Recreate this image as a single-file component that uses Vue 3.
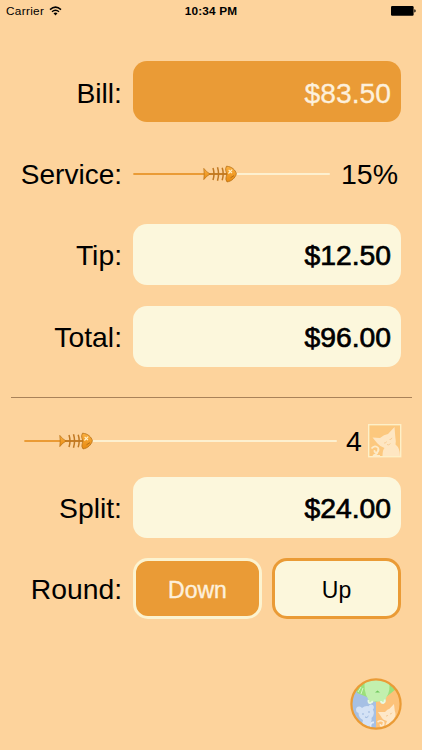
<script setup>
import { ref, computed } from 'vue'

const bill = ref(83.5)
const service = ref(15)
const people = ref(4)
const round = ref('down')

const tip = computed(() => {
  const raw = (bill.value * (100 + service.value)) / 100
  const total = round.value === 'down' ? Math.floor(raw) : Math.ceil(raw)
  return total - bill.value
})
const total = computed(() => bill.value + tip.value)
const split = computed(() => total.value / people.value)

// slider fill, in percent of the track
const serviceFill = computed(() => (service.value / 29) * 100)
const peopleFill = computed(() => ((people.value + 0.28) / 20) * 100)

function money(value) {
  return '$' + value.toFixed(2)
}
</script>

<template>
  <div class="screen">
    <svg class="defs" width="0" height="0">
      <defs>
        <linearGradient id="bone" x1="0" y1="0" x2="0" y2="1">
          <stop offset="0" stop-color="#fbb040" />
          <stop offset="1" stop-color="#e88a10" />
        </linearGradient>
        <symbol id="fish" viewBox="0 0 34 18">
          <path d="M5 9H25" stroke="#c07822" stroke-width="1.6" fill="none" />
          <path
            d="M10 3Q12 9 10 15M14.5 2.3Q16.6 9 14.5 15.7M19.2 2.8Q21.2 9 19.2 15.2"
            stroke="#c07822"
            stroke-width="1.5"
            fill="none"
          />
          <path d="M0.8 3.4Q3.5 7.2 7.2 9Q3.5 10.8 0.8 14.6Q1.6 9 0.8 3.4Z" fill="url(#bone)" stroke="#b87014" stroke-width="0.7" />
          <path
            d="M23.5 1.2C29 1.6 32.4 5 33.4 8.8C32.2 13 28.5 16.4 24 16.9Q22.4 14.5 23 12.5Q25 9 22.8 5.8Q22.2 3.5 23.5 1.2Z"
            fill="url(#bone)"
            stroke="#b87014"
            stroke-width="0.8"
          />
          <path d="M25.6 4.9L29 8.1M29.2 4.7L25.4 8.5" stroke="#fff1cc" stroke-width="1.2" />
          <path d="M27.5 12.8L31 10.6" stroke="#a86410" stroke-width="0.8" />
        </symbol>
      </defs>
    </svg>

    <header class="status">
      <div class="carrier">
        <span>Carrier</span>
        <svg width="13" height="10" viewBox="0 0 13 10">
          <path d="M1 3.6Q6.5 -1.4 12 3.6" fill="none" stroke="#000" stroke-width="1.5" />
          <path d="M3 5.8Q6.5 2.7 10 5.8" fill="none" stroke="#000" stroke-width="1.4" />
          <path d="M4.5 7.3Q6.5 5.6 8.5 7.3L6.5 9.4Z" />
        </svg>
      </div>
      <span class="time">10:34 PM</span>
      <svg class="battery" width="25" height="10" viewBox="0 0 25 10">
        <rect width="22.6" height="9.8" rx="1.2" />
        <path d="M23.3 3.3Q24.7 3.6 24.7 4.9Q24.7 6.2 23.3 6.5Z" />
      </svg>
    </header>

    <main>
      <div class="row bill">
        <label>Bill:</label>
        <div class="field active">{{ money(bill) }}</div>
      </div>
      <div class="row service">
        <label>Service:</label>
        <div class="slider">
          <div class="fill" :style="{ width: serviceFill + '%' }"></div>
          <svg class="thumb" :style="{ left: serviceFill + '%' }"><use href="#fish" /></svg>
        </div>
        <span class="percent">{{ service }}%</span>
      </div>
      <div class="row tip">
        <label>Tip:</label>
        <div class="field">{{ money(tip) }}</div>
      </div>
      <div class="row total">
        <label>Total:</label>
        <div class="field">{{ money(total) }}</div>
      </div>

      <hr />

      <div class="people">
        <div class="slider">
          <div class="fill" :style="{ width: peopleFill + '%' }"></div>
          <svg class="thumb" :style="{ left: peopleFill + '%' }"><use href="#fish" /></svg>
        </div>
        <span class="count">{{ people }}</span>
        <svg class="cat" width="34" height="34" viewBox="0 0 34 34">
          <rect x="0.7" y="0.7" width="32" height="32" fill="#fcc87e" stroke="#fdf0c8" stroke-width="1.4" />
          <path
            d="M4.5 13.5L12 14Q16 10.5 20 10L26.5 3L27.3 13Q28.3 18 27.5 20.5Q32 24 32 32H14.5Q14.5 26 16.5 24Q12 22.5 9.5 19.5Z"
            fill="#fee6c2"
          />
          <path d="M3.5 24.5Q7 20.5 10.2 24Q11.5 27.5 8.2 28.6Q5.8 28.3 6.7 26.2M10.2 25Q10.6 29.5 5 31.8H12" fill="none" stroke="#fdebc8" stroke-width="1.8" />
          <path d="M16 19Q18 19.5 18.5 17.5M21.5 15.5Q23.5 15.8 24 13.8M19 20.5Q20.8 21.8 22.5 19.5" fill="none" stroke="#f6c68b" stroke-width="0.8" />
        </svg>
      </div>

      <div class="row split">
        <label>Split:</label>
        <div class="field">{{ money(split) }}</div>
      </div>
      <div class="row round">
        <label>Round:</label>
        <div class="buttons">
          <button :class="{ selected: round === 'down' }" @click="round = 'down'">Down</button>
          <button :class="{ selected: round === 'up' }" @click="round = 'up'">Up</button>
        </div>
      </div>
    </main>

    <footer>
      <svg width="52" height="52" viewBox="0 0 52 52">
        <defs>
          <clipPath id="disc"><circle cx="26" cy="26" r="24.5" /></clipPath>
        </defs>
        <g clip-path="url(#disc)">
          <rect width="52" height="52" fill="#fcc27a" />
          <path d="M0 0H26V52H0Z" fill="#a6c0e4" />
          <path d="M5 9L13 0H41L46 11L35 20L26 24L17 19L7 15Z" fill="#9be07b" />
          <!-- green animal, upside down -->
          <path d="M15 2H39Q41 13 36 20Q36 25 32.5 25.5Q30.5 25 30 23.5H23.5Q22 26 19.5 25.5Q17 24.5 18.3 21.5Q13 13 15 2Z" fill="#c2f0ae" />
          <path d="M18.5 22Q18 25.5 20.5 25Q22.5 24.5 22.5 22.8M31 23Q31 25 33.3 25Q35.5 24 34.5 21.5" fill="none" stroke="#e9f8e4" stroke-width="1.8" />
          <path d="M25 14.5L27.5 12.5L30 14.5Z" fill="#6fc75d" />
          <path d="M8 14L11 9M11 16L13 10" stroke="#d3f5c5" stroke-width="1" />
          <!-- blue bear -->
          <path
            d="M6 32Q6 28.5 9 28.5Q11 28.3 12 30Q15 27.5 18.5 28.2Q20 25.5 22.8 27Q25 29 22.8 31.5Q25.5 36 21.5 40Q22 42 21 44L18 52H11Q12 46 13 42Q8.5 40 8.5 35Q6 34.5 6 32Z"
            fill="#d4e2f5"
          />
          <path d="M12 36H14M18 34H20M15 39Q17 40.5 18.5 38" stroke="#9bb6dd" stroke-width="1" fill="none" />
          <path d="M20.5 49Q20 44 24 44.5" fill="none" stroke="#e3ecf8" stroke-width="1.8" />
          <!-- orange cat -->
          <path d="M28 34L35 34Q37.5 31 39.5 30.8L44 26L44.8 33Q46.5 37 44.3 40Q47.5 42 48 46L40 52H35Q35 47 37 43Q32.5 42 31 38.5Z" fill="#fee8c8" />
          <path d="M27.5 44Q31 41.5 33.5 44Q34.5 47.5 31.8 48Q30 47.5 30.5 46M33.4 45Q33.5 48.5 29.5 50" fill="none" stroke="#fdebcf" stroke-width="1.6" />
          <path d="M36 38Q37.3 38.3 38 37M40 36Q41.5 36 42 34.8" fill="none" stroke="#f3c188" stroke-width="0.8" />
        </g>
        <circle cx="26" cy="26" r="24.6" fill="none" stroke="#ea9b36" stroke-width="2.2" />
      </svg>
    </footer>
  </div>
</template>

<style>
body {
  margin: 0;
  background-color: #fdd39c;
}
</style>

<style scoped>
.screen {
  width: 422px;
  height: 750px;
  display: flex;
  flex-direction: column;
  overflow: hidden;
  box-sizing: border-box;
  background-color: #fdd39c;
  color: #000;
  font-family: 'Liberation Sans', Arial, sans-serif;
  font-size: 28.3px;
}

.defs {
  display: block;
  flex: none;
}

.status {
  height: 22px;
  padding: 0 6px;
  display: grid;
  grid-template-columns: 1fr auto 1fr;
  align-items: center;
  font-size: 11.8px;
}

.carrier {
  display: flex;
  align-items: center;
  gap: 5px;
  letter-spacing: 0.3px;
}

.time {
  font-weight: bold;
  letter-spacing: 0.2px;
}

.battery {
  justify-self: end;
}

main {
  display: flex;
  flex-direction: column;
  padding-top: 39px;
}

.row {
  display: grid;
  grid-template-columns: 122px 268px;
  column-gap: 11px;
  align-items: center;
  height: 61px;
}

label {
  text-align: right;
  padding-top: 2px;
}

.bill label {
  padding-top: 3px;
}

.field {
  height: 61px;
  line-height: 62px;
  border-radius: 14px;
  box-sizing: border-box;
  padding-right: 10px;
  text-align: right;
  background-color: #fcf7dc;
  -webkit-text-stroke: 0.7px #000;
}

.field.active {
  line-height: 64px;
  background-color: #ea9b36;
  color: #fdf0dc;
  -webkit-text-stroke: 0.3px #fdf0dc;
}

.row.service {
  grid-template-columns: 122px 197px 60px;
  height: 62px;
  margin: 20px 0;
}

.service label {
  padding-top: 4px;
  font-size: 28px;
}

.service .slider {
  margin-top: 2px;
}

.percent {
  padding-top: 2px;
  font-size: 28.5px;
}

.row.total {
  margin-top: 21px;
}

.slider {
  position: relative;
  height: 2px;
  border-radius: 1px;
  background-color: #fdf0d0;
}

.fill {
  height: 2px;
  border-radius: 1px;
  background-color: #ea9b36;
}

.thumb {
  position: absolute;
  top: -8px;
  width: 34px;
  height: 18px;
  margin-left: -32px;
}

hr {
  width: 401px;
  height: 1px;
  margin: 30px 0 0 11px;
  border: 0;
  background-color: #a98259;
}

.people {
  display: grid;
  grid-template-columns: 313px 16px 34px;
  column-gap: 9px;
  align-items: center;
  height: 34px;
  margin: 25px 0 20px;
  padding-left: 24px;
}

.count {
  padding-top: 2px;
}

.cat {
  display: block;
  margin-left: -3px;
}

.row.round {
  margin-top: 20px;
}

.buttons {
  display: grid;
  grid-template-columns: 1fr 1fr;
  gap: 10px;
}

button {
  height: 61px;
  box-sizing: border-box;
  border: 3px solid #ea9b36;
  border-radius: 15px;
  padding: 3px 0 0;
  background-color: #fcf7dc;
  color: #000;
  font-family: inherit;
  font-size: 23px;
}

button.selected {
  border-color: #fcf3d0;
  background-color: #ea9b36;
  color: #fdf0dc;
  -webkit-text-stroke: 0.4px #fdf0dc;
}

footer {
  display: flex;
  justify-content: flex-end;
  padding: 59px 20px 0 0;
}
</style>
